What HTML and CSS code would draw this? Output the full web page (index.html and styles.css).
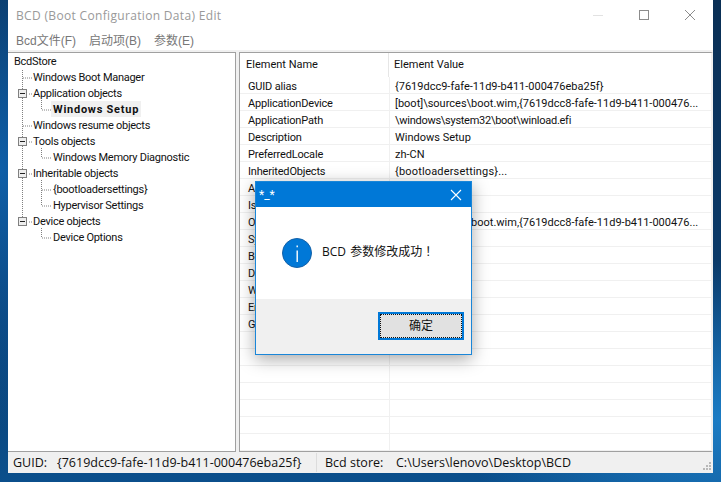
FILE: index.html
```html
<!DOCTYPE html>
<html lang="zh-CN">
<head>
<meta charset="utf-8">
<title>BCD Edit</title>
<link rel="stylesheet" href="styles.css">
</head>
<body>
<main class="window">
  <header class="titlebar">
    <span class="title">BCD (Boot Configuration Data) Edit</span>
    <span class="controls">
      <svg class="ctl" width="46" height="30" viewBox="0 0 46 30"><path d="M18 15.5h10" stroke="#e2e2e2" fill="none"/></svg>
      <svg class="ctl" width="46" height="30" viewBox="0 0 46 30"><rect x="18.5" y="10.5" width="9" height="9" stroke="#8c8c8c" fill="none"/></svg>
      <svg class="ctl" width="46" height="30" viewBox="0 0 46 30"><path d="M18 10l10 10M28 10l-10 10" stroke="#8c8c8c" fill="none"/></svg>
    </span>
  </header>
  <nav class="menubar"><span>Bcd文件(F)</span><span>启动项(B)</span><span>参数(E)</span></nav>
  <div class="panes">
    <section class="tree">
      <svg class="connectors" width="60" height="200" viewBox="0 0 60 200">
        <g stroke="#808080" stroke-dasharray="1 1" fill="none">
          <path d="M12.5 17V169"/>
          <path d="M13 25h10M19 41h4M13 73h10M19 89h4M19 121h4M19 169h4"/>
          <path d="M31.5 47V57M32 57h10"/>
          <path d="M31.5 95V105M32 105h10"/>
          <path d="M31.5 127V153M32 137h10M32 153h10"/>
          <path d="M31.5 175V185M32 185h10"/>
        </g>
        <g class="box">
          <rect x="8.5" y="36.5" width="8" height="8"/><path d="M10 40.5h5"/>
          <rect x="8.5" y="84.5" width="8" height="8"/><path d="M10 88.5h5"/>
          <rect x="8.5" y="116.5" width="8" height="8"/><path d="M10 120.5h5"/>
          <rect x="8.5" y="164.5" width="8" height="8"/><path d="M10 168.5h5"/>
        </g>
      </svg>
      <ul class="nodes">
        <li class="lv0">BcdStore</li>
        <li class="lv1">Windows Boot Manager</li>
        <li class="lv1">Application objects</li>
        <li class="lv2"><b class="selected">Windows Setup</b></li>
        <li class="lv1">Windows resume objects</li>
        <li class="lv1">Tools objects</li>
        <li class="lv2">Windows Memory Diagnostic</li>
        <li class="lv1">Inheritable objects</li>
        <li class="lv2">{bootloadersettings}</li>
        <li class="lv2">Hypervisor Settings</li>
        <li class="lv1">Device objects</li>
        <li class="lv2">Device Options</li>
      </ul>
    </section>
    <section class="list">
      <div class="head"><span class="hname">Element Name</span><span class="hvalue">Element Value</span></div>
      <div class="row"><span>GUID alias</span><span>{7619dcc9-fafe-11d9-b411-000476eba25f}</span></div>
      <div class="row"><span>ApplicationDevice</span><span>[boot]\sources\boot.wim,{7619dcc8-fafe-11d9-b411-000476...</span></div>
      <div class="row"><span>ApplicationPath</span><span class="tight">\windows\system32\boot\winload.efi</span></div>
      <div class="row"><span>Description</span><span>Windows Setup</span></div>
      <div class="row"><span>PreferredLocale</span><span>zh-CN</span></div>
      <div class="row"><span>InheritedObjects</span><span class="loose">{bootloadersettings}...</span></div>
      <div class="row"><span>AllowedInMemory</span><span></span></div>
      <div class="row"><span>IsWinPE</span><span></span></div>
      <div class="row"><span>OSDevice</span><span>[boot]\sources\boot.wim,{7619dcc8-fafe-11d9-b411-000476...</span></div>
      <div class="row"><span>SystemRoot</span><span></span></div>
      <div class="row"><span>BootMenu</span><span></span></div>
      <div class="row"><span>DetectHal</span><span></span></div>
      <div class="row"><span>WinPE</span><span></span></div>
      <div class="row"><span>Ems</span><span></span></div>
      <div class="row"><span>Graphics</span><span></span></div>
      <div class="row"><span></span><span></span></div>
      <div class="row"><span></span><span></span></div>
      <div class="row"><span></span><span></span></div>
      <div class="row"><span></span><span></span></div>
      <div class="row"><span></span><span></span></div>
      <div class="row"><span></span><span></span></div>
      <div class="row last"><span></span><span></span></div>
    </section>
  </div>
  <footer class="statusbar">
    <span class="guid"><span class="label">GUID:</span>{7619dcc9-fafe-11d9-b411-000476eba25f}</span>
    <span class="store"><span class="label">Bcd store:</span>C:\Users\lenovo\Desktop\BCD</span>
    <svg class="grip" width="10" height="10" viewBox="0 0 10 10" fill="#b8b8b8"><path d="M7 0h2v2H7zM4 3h2v2H4zM7 3h2v2H7zM1 6h2v2H1zM4 6h2v2H4zM7 6h2v2H7z"/></svg>
  </footer>
</main>
<aside class="dialog">
  <header class="dlg-title">
    <span>*_*</span>
    <svg width="14" height="14" viewBox="0 0 14 14"><path d="M2 2l10 10M12 2L2 12" stroke="#fff" stroke-width="1.1" fill="none"/></svg>
  </header>
  <div class="dlg-body">
    <svg width="30" height="30" viewBox="0 0 30 30"><circle cx="15" cy="15" r="14.5" fill="#0078d7" stroke="#1461a8"/><path d="M14.5 12.5h1.4V24h-1.4zM14.5 7.5h1.4v1.8h-1.4z" fill="#fff"/></svg>
    <span class="msg">BCD 参数修改成功<span class="bang">！</span></span>
  </div>
  <div class="dlg-foot"><button class="ok" type="button"><span>确定</span></button></div>
</aside>
</body>
</html>
```
FILE: styles.css
```css
* { box-sizing: border-box; }
html, body { margin: 0; height: 482px; overflow: hidden; }
body {
  padding: 0 8px 9px 8px;
  background:
    radial-gradient(ellipse 120px 260px at 0 170px, #0f5fa8 0, rgba(15,95,168,0) 100%),
    radial-gradient(ellipse 260px 160px at 721px 420px, #1c7cc4 0, rgba(28,124,196,0) 100%),
    linear-gradient(180deg, #0a2f55 0, #0a3a6a 60%, #0b4f8c 100%);
  font: 11px/16px Roboto, "Noto Sans CJK SC", sans-serif;
  color: #111;
}
.window { height: 473px; background: #fff; display: flex; flex-direction: column; }
.titlebar { height: 33px; flex: none; display: flex; justify-content: space-between; align-items: flex-start; }
.title { color: #999; font-family: "Open Sans", sans-serif; font-size: 12px; line-height: 31px; padding-left: 8px; letter-spacing: .33px; }
.controls { display: flex; }
.ctl { display: block; }
.menubar { height: 17px; flex: none; display: flex; gap: 13px; padding-left: 8px; color: #777; font-family: "Liberation Sans", "Noto Sans CJK SC", sans-serif; font-size: 12px; line-height: 16px; }
.panes { flex: 1; min-height: 0; display: flex; gap: 3px; background: #f0f0f0; padding-top: 2px; }
.tree, .list { background: #fff; border-top: 1px solid #a0a0a0; border-bottom: 1px solid #a0a0a0; overflow: hidden; }
.tree { width: 228px; position: relative; border-right: 1px solid #a0a0a0; }
.connectors { position: absolute; left: 2px; top: 0; }
.box rect { fill: #eee; stroke: #808080; }
.box path { stroke: #222; fill: none; }
.nodes { list-style: none; margin: 0; padding: 0; position: relative; letter-spacing: -.27px; }
.nodes li { height: 16px; line-height: 18px; white-space: nowrap; }
.lv0 { padding-left: 6px; }
.lv1 { padding-left: 25px; }
.lv2 { padding-left: 45px; }
.selected { display: inline-block; height: 16px; line-height: 18px; background: #f0f0f0; padding: 0 2px; margin-left: -2px; font-weight: 700; letter-spacing: .75px; }
.list { flex: 1; min-width: 0; border-left: 1px solid #a0a0a0; border-right: 2px solid #f0f0f0; }
.head { height: 24px; display: flex; line-height: 24px; }
.hname { width: 149px; padding-left: 6px; border-right: 1px solid #e6e6e6; }
.hvalue { padding-left: 5px; }
.row { height: 17px; display: flex; line-height: 20px; border-bottom: 1px solid #f0f0f0; white-space: nowrap; }
.row > span:first-child { width: 150px; flex: none; padding-left: 8px; border-right: 1px solid #f0f0f0; overflow: hidden; letter-spacing: -.18px; }
.row > span:last-child { padding-left: 5px; }
.row > .tight { letter-spacing: -.27px; }
.row > .loose { letter-spacing: .17px; }
.statusbar { height: 21px; flex: none; background: #f0f0f0; display: flex; align-items: center; position: relative; padding-left: 5px; font-family: "Open Sans", sans-serif; font-size: 12.5px; }
.guid { width: 304px; height: 19px; line-height: 19px; border-right: 1px solid #dcdcdc; white-space: nowrap; }
.guid .label { display: inline-block; width: 44px; }
.store { padding-left: 8px; white-space: nowrap; }
.store .label { display: inline-block; width: 71px; }
.grip { position: absolute; right: 1px; bottom: 1px; }
.dialog {
  position: absolute; left: 255px; top: 181px; width: 217px; height: 174px;
  border: 1px solid #1a86d8; background: #f0f0f0; display: flex; flex-direction: column;
  box-shadow: 0 4px 16px rgba(0,0,0,.35);
}
.dlg-title { height: 25px; flex: none; background: #0078d7; color: #fff; display: flex; justify-content: space-between; align-items: center; padding: 0 8px 0 3px; font-size: 12px; }
.dlg-body { height: 92px; flex: none; background: #fff; display: flex; align-items: center; gap: 10px; padding: 0 0 0 26px; font-size: 12px; }
.msg { font-family: "Open Sans", "Noto Sans CJK SC", sans-serif; word-spacing: 1px; margin-bottom: 3px; }
.bang { font-family: "Noto Sans CJK TC", sans-serif; margin-left: 3px; }
.dlg-foot { flex: 1; display: flex; justify-content: flex-end; align-items: flex-start; padding: 13px 7px 0 0; }
.ok { width: 86px; height: 28px; padding: 0; border: 2px solid #0078d7; background: #e1e1e1; font: inherit; font-size: 12px; color: #111; display: flex; }
.ok span { flex: 1; border: 1px dotted #111; line-height: 22px; }
```
